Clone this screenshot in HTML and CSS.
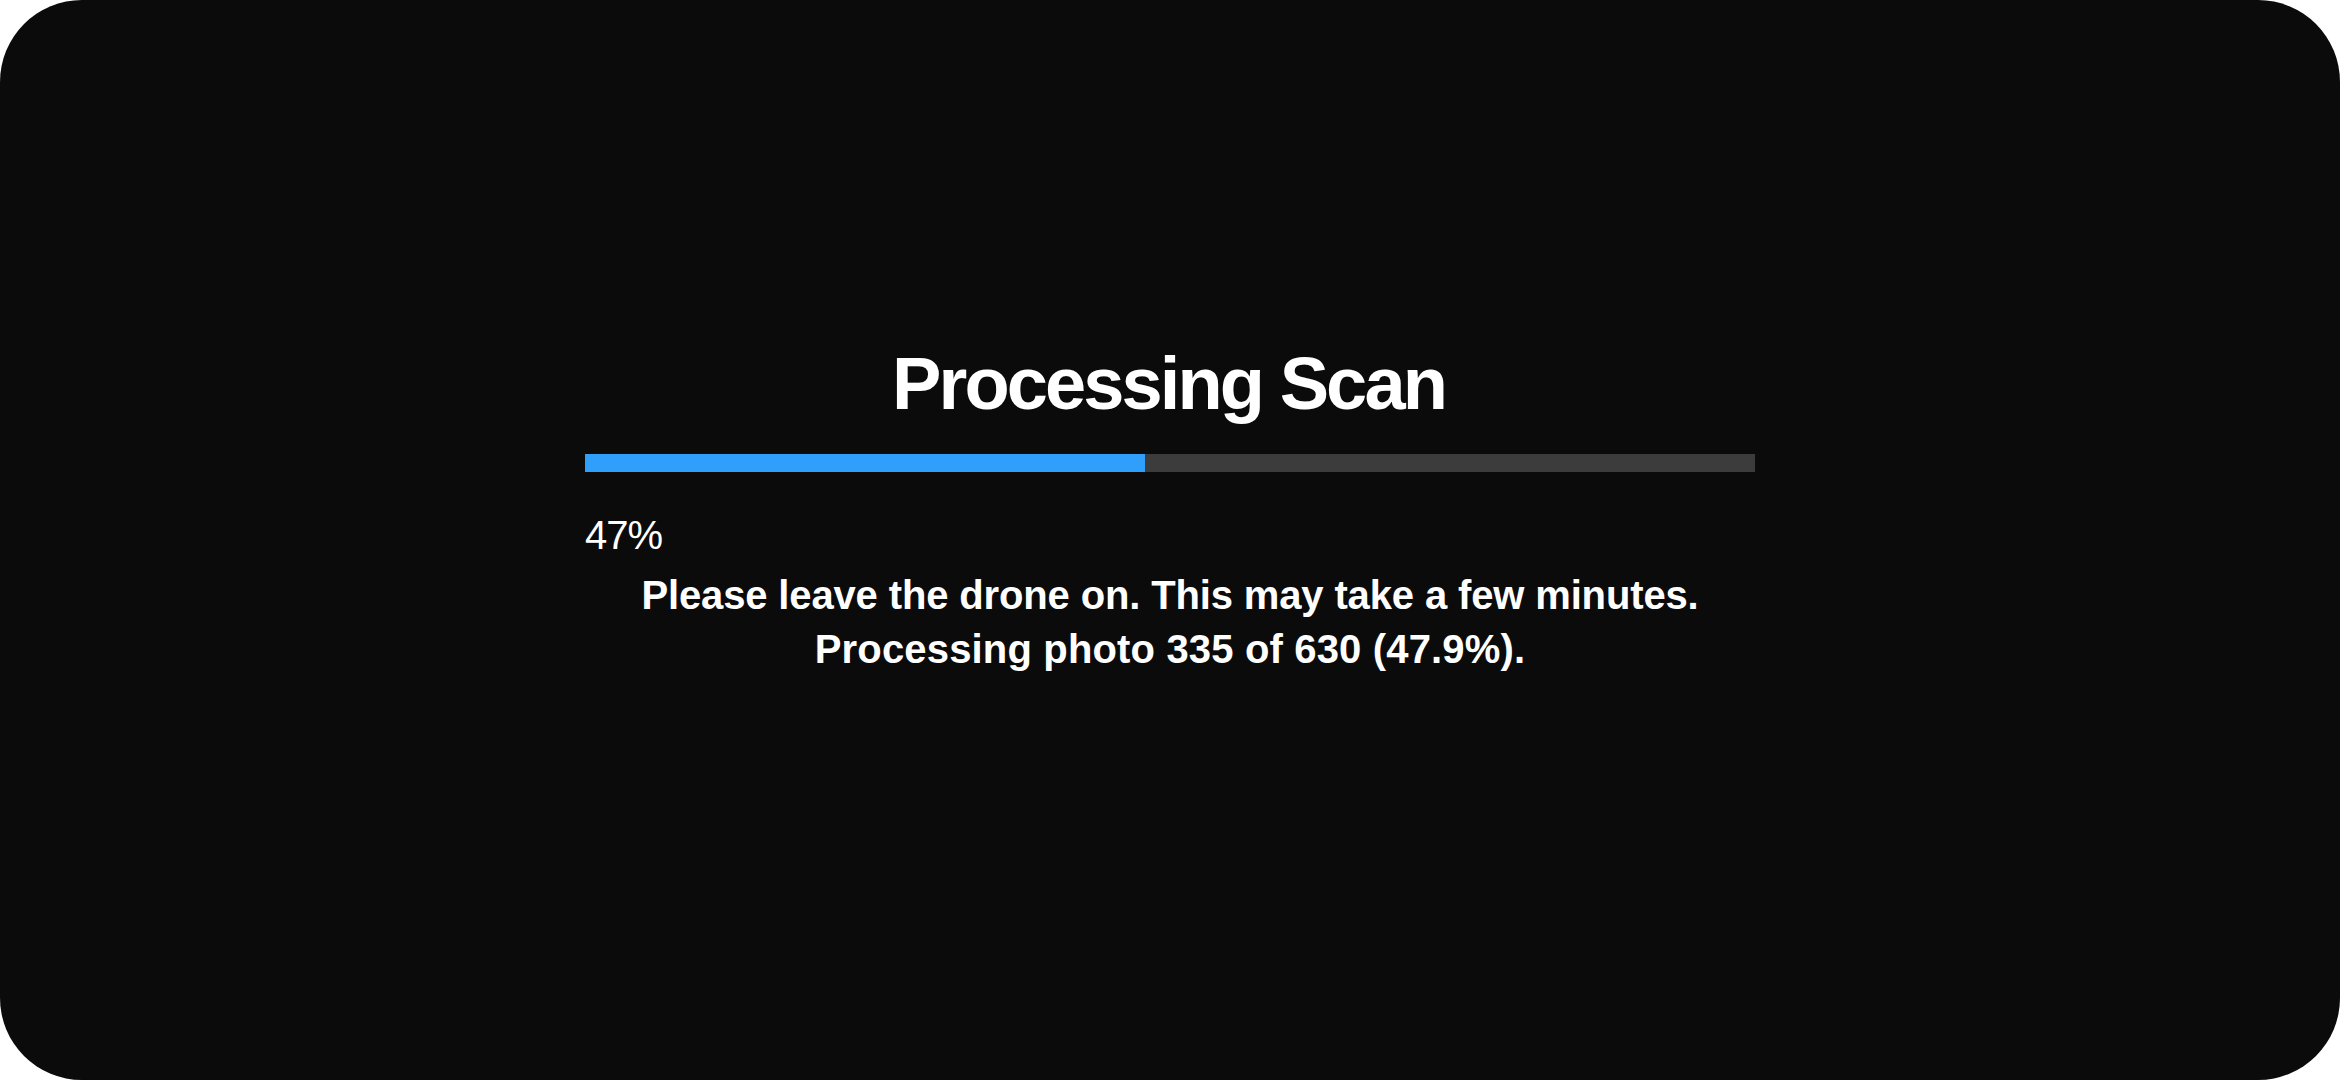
FILE: index.html
```html
<!DOCTYPE html>
<html lang="en">
<head>
<meta charset="utf-8">
<title>Processing Scan</title>
<link rel="stylesheet" href="styles.css">
</head>
<body>
<div class="screen">
  <div class="panel">
    <h1 class="title">Processing Scan</h1>
    <div class="progress">
      <div class="progress-fill" style="width: 47.9%"></div>
    </div>
    <div class="percent">47%</div>
    <div class="message">
      <p class="line line-hint">Please leave the drone on. This may take a few minutes.</p>
      <p class="line line-count">Processing photo 335 of 630 (47.9%).</p>
    </div>
  </div>
</div>
</body>
</html>
```

FILE: styles.css
```css
html, body {
  margin: 0;
  padding: 0;
  background: #ffffff;
}

.screen {
  width: 2340px;
  height: 1080px;
  background: #0b0b0b;
  border-radius: 82px;
  display: flex;
  flex-direction: column;
  align-items: center;
  justify-content: center;
  padding-bottom: 65px;
  box-sizing: border-box;
  font-family: "Liberation Sans", Arial, sans-serif;
  color: #ffffff;
}

.panel {
  width: 1170px;
  display: flex;
  flex-direction: column;
}

.title {
  margin: 0;
  font-size: 74px;
  line-height: 90px;
  font-weight: 700;
  letter-spacing: -2.9px;
  text-align: center;
  text-indent: -3px;
}

.progress {
  margin-top: 25px;
  height: 18px;
  background: #3c3c3c;
  display: flex;
}

.progress-fill {
  height: 100%;
  background: #2f9ffb;
}

.percent {
  margin-top: 39px;
  font-size: 40px;
  line-height: 48px;
  letter-spacing: -1px;
}

.message {
  margin-top: 9px;
  display: flex;
  flex-direction: column;
}

.line {
  margin: 0;
  font-size: 40px;
  line-height: 54px;
  font-weight: 700;
  text-align: center;
}

.line-hint {
  letter-spacing: -0.14px;
}

.line-count {
  letter-spacing: 0.16px;
}
```
